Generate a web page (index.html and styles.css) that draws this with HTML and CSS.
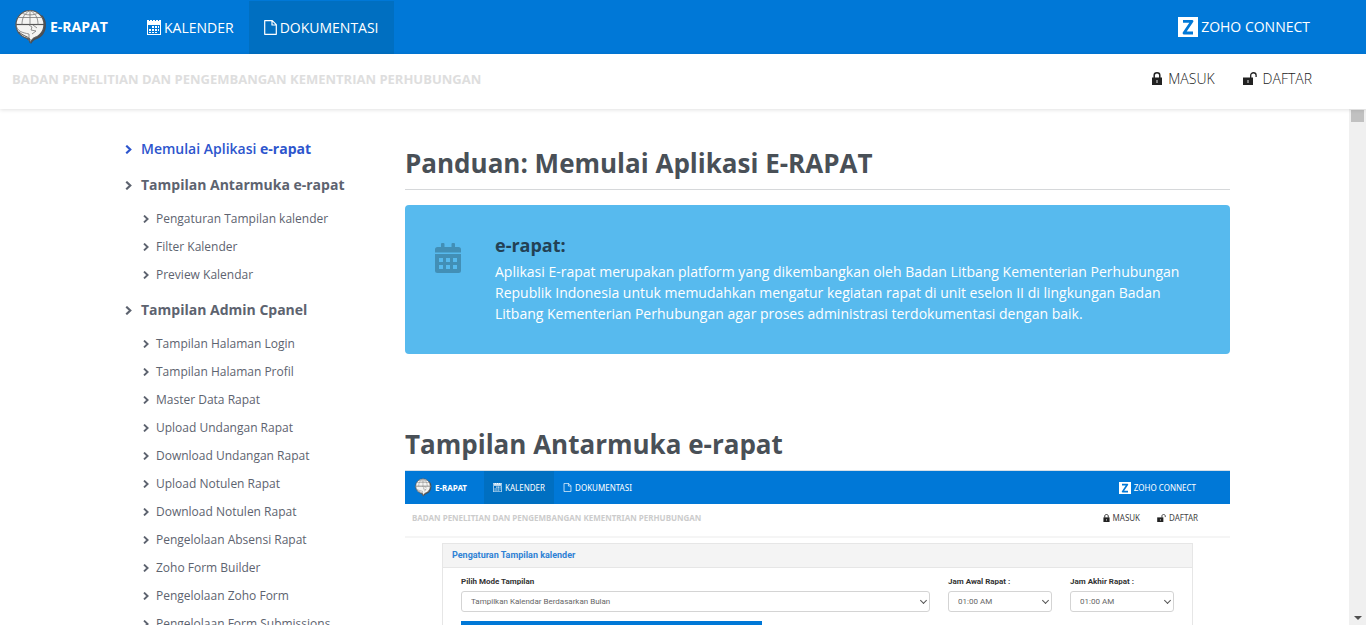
FILE: index.html
```html
<!DOCTYPE html>
<html lang="id">
<head>
<meta charset="utf-8">
<meta name="viewport" content="width=device-width, initial-scale=1">
<title>E-RAPAT - Dokumentasi</title>
<link rel="stylesheet" href="styles.css">
</head>
<body>
<svg class="defs" aria-hidden="true">
  <symbol id="i-logo" viewBox="0 0 32 36">
    <path d="M6 26c5 3 8 5 10 9 2-3 3-4 6-5 6-2 9-8 9-14 0-5-2-8-4-10z" fill="#4a4f55"/>
    <circle cx="15" cy="15.500" r="14" fill="#f4f4f2" stroke="#555" stroke-width="1.200"/>
    <path d="M4 23c4 4 8 4 11 7v4c2-3 2-5 6-6" fill="#f4f4f2" stroke="#555" stroke-width="1"/>
    <path d="M1 15.500h28" stroke="#555" stroke-width="1.200"/>
    <path d="M3 8.500h24M15 1.500v14M15 1.500C8 5 7 11 7 15.500M15 1.500c7 3.500 8 9.500 8 14M7 4c4 2.500 12 2.500 16 0M1 15.500c1 7 6 8 13 9.500M14 16l3 2-1 3 5 1-4 3M18 16l4 3M14 25v7" fill="none" stroke="#777" stroke-width=".8"/>
  </symbol>
  <symbol id="i-cal" viewBox="0 0 14 15">
    <path d="M0 0h2v1h1V0h2v1h1V0h2v1h1V0h2v1h1V0h2v3H0zM0 4h14v11H0zM1 5v9h12V5z" fill="#fff" fill-rule="evenodd"/>
    <path d="M5 6h2v2H5zM8 6h2v2H8zM11 6h1v2h-1zM2 9h2v2H2zM5 9h2v2H5zM8 9h2v2H8zM11 9h1v2h-1zM2 12h2v1H2zM5 12h2v1H5zM8 12h2v1H8z" fill="#fff"/>
    <path d="M0 3h14v1H0z" fill="#fff"/>
  </symbol>
  <symbol id="i-doc" viewBox="0 0 13 15">
    <path d="M.7.7h7.600l4 4v9.600H.7zM8 .7V5h4.300" fill="none" stroke="#fff" stroke-width="1.200" stroke-linejoin="round"/>
  </symbol>
  <symbol id="i-zoho" viewBox="0 0 20 20">
    <path d="M0 0h20v20H0z" fill="#fff"/>
    <path d="M5 4.300h9L6 16h9" fill="none" stroke="#0078d7" stroke-width="2.800" stroke-linejoin="round"/>
  </symbol>
  <symbol id="i-lock" viewBox="0 0 10 13">
    <path d="M2.200 6V3.300c0-3.400 5.600-3.400 5.600 0V6" fill="none" stroke="#222" stroke-width="1.500"/>
    <path d="M0 5.500h10V13H0z" fill="#222"/><path d="M4.500 8h1v3h-1z" fill="#ddd"/>
  </symbol>
  <symbol id="i-unlock" viewBox="0 0 14 13">
    <path d="M7.700 6V3.300c0-3.400 5.400-3.400 5.400 0V5" fill="none" stroke="#222" stroke-width="1.300"/>
    <path d="M0 5.500h10V13H0z" fill="#222"/><path d="M4.500 8h1v3h-1z" fill="#ddd"/>
  </symbol>
  <symbol id="i-chev" viewBox="0 0 6 8">
    <path d="M1 .6 4.600 4 1 7.400" fill="none" stroke="currentColor" stroke-width="1.900"/>
  </symbol>
  <symbol id="i-date" viewBox="0 0 26 30">
    <path fill-rule="evenodd" d="M0 9.500V6.500Q0 4 2.500 4H6V1q0-1 1-1h1.500q1 0 1 1v3h7V1q0-1 1-1H19q1 0 1 1v3h3.500Q26 4 26 6.500V9.500zM0 11h26v16.500q0 2.500-2.500 2.500h-21Q0 30 0 27.500zM4 15v4h4v-4zm7 0v4h4v-4zm7 0v4h4v-4zM4 22v4h4v-4zm7 0v4h4v-4zm7 0v4h4v-4z" fill="currentColor"/>
  </symbol>
</svg>

<header class="topbar">
  <a class="brand" href="#"><svg class="ic-logo"><use href="#i-logo"/></svg>E-RAPAT</a>
  <nav class="tabs">
    <a class="tab" href="#"><svg class="ic-cal"><use href="#i-cal"/></svg>KALENDER</a>
    <a class="tab tab-active" href="#"><svg class="ic-doc"><use href="#i-doc"/></svg>DOKUMENTASI</a>
  </nav>
  <a class="zoho" href="#"><svg class="ic-zoho"><use href="#i-zoho"/></svg>ZOHO CONNECT</a>
</header>
<div class="subbar">
  <strong class="agency">BADAN PENELITIAN DAN PENGEMBANGAN KEMENTRIAN PERHUBUNGAN</strong>
  <a class="account" href="#"><svg class="ic-lock"><use href="#i-lock"/></svg>MASUK</a>
  <a class="account" href="#"><svg class="ic-unlock"><use href="#i-unlock"/></svg>DAFTAR</a>
</div>

<div class="viewport">
  <div class="page">
    <nav class="toc">
      <a class="toc-head toc-current" href="#"><svg class="ic-chev-lg"><use href="#i-chev"/></svg><span>Memulai Aplikasi <b>e-rapat</b></span></a>
      <a class="toc-head" href="#"><svg class="ic-chev-lg"><use href="#i-chev"/></svg><b>Tampilan Antarmuka e-rapat</b></a>
      <ul class="toc-list">
        <li><a href="#"><svg class="ic-chev"><use href="#i-chev"/></svg>Pengaturan Tampilan kalender</a></li>
        <li><a href="#"><svg class="ic-chev"><use href="#i-chev"/></svg>Filter Kalender</a></li>
        <li><a href="#"><svg class="ic-chev"><use href="#i-chev"/></svg>Preview Kalendar</a></li>
      </ul>
      <a class="toc-head" href="#"><svg class="ic-chev-lg"><use href="#i-chev"/></svg><b>Tampilan Admin Cpanel</b></a>
      <ul class="toc-list">
        <li><a href="#"><svg class="ic-chev"><use href="#i-chev"/></svg>Tampilan Halaman Login</a></li>
        <li><a href="#"><svg class="ic-chev"><use href="#i-chev"/></svg>Tampilan Halaman Profil</a></li>
        <li><a href="#"><svg class="ic-chev"><use href="#i-chev"/></svg>Master Data Rapat</a></li>
        <li><a href="#"><svg class="ic-chev"><use href="#i-chev"/></svg>Upload Undangan Rapat</a></li>
        <li><a href="#"><svg class="ic-chev"><use href="#i-chev"/></svg>Download Undangan Rapat</a></li>
        <li><a href="#"><svg class="ic-chev"><use href="#i-chev"/></svg>Upload Notulen Rapat</a></li>
        <li><a href="#"><svg class="ic-chev"><use href="#i-chev"/></svg>Download Notulen Rapat</a></li>
        <li><a href="#"><svg class="ic-chev"><use href="#i-chev"/></svg>Pengelolaan Absensi Rapat</a></li>
        <li><a href="#"><svg class="ic-chev"><use href="#i-chev"/></svg>Zoho Form Builder</a></li>
        <li><a href="#"><svg class="ic-chev"><use href="#i-chev"/></svg>Pengelolaan Zoho Form</a></li>
        <li><a href="#"><svg class="ic-chev"><use href="#i-chev"/></svg>Pengelolaan Form Submissions</a></li>
      </ul>
    </nav>

    <main class="content">
      <h1 class="title">Panduan: Memulai Aplikasi E-RAPAT</h1>
      <section class="callout">
        <svg class="ic-date"><use href="#i-date"/></svg>
        <div>
          <h2 class="callout-title">e-rapat:</h2>
          <p class="callout-text">Aplikasi E-rapat merupakan platform yang dikembangkan oleh Badan Litbang Kementerian Perhubungan Republik Indonesia untuk memudahkan mengatur kegiatan rapat di unit eselon II di lingkungan Badan Litbang Kementerian Perhubungan agar proses administrasi terdokumentasi dengan baik.</p>
        </div>
      </section>
      <h2 class="section-title">Tampilan Antarmuka e-rapat</h2>

      <section class="preview">
        <div class="mini-top">
          <a class="mini-brand" href="#"><svg class="mini-logo"><use href="#i-logo"/></svg>E-RAPAT</a>
          <a class="mini-tab mini-active" href="#"><svg class="mini-icon"><use href="#i-cal"/></svg>KALENDER</a>
          <a class="mini-tab" href="#"><svg class="mini-icon"><use href="#i-doc"/></svg>DOKUMENTASI</a>
          <a class="mini-zoho" href="#"><svg class="mini-z"><use href="#i-zoho"/></svg>ZOHO CONNECT</a>
        </div>
        <div class="mini-sub">
          <strong class="mini-agency">BADAN PENELITIAN DAN PENGEMBANGAN KEMENTRIAN PERHUBUNGAN</strong>
          <a class="mini-account" href="#"><svg class="mini-lock"><use href="#i-lock"/></svg>MASUK</a>
          <a class="mini-account" href="#"><svg class="mini-unlock"><use href="#i-unlock"/></svg>DAFTAR</a>
        </div>
        <div class="card">
          <h3 class="card-title">Pengaturan Tampilan kalender</h3>
          <form class="card-form">
            <div class="field field-wide">
              <label for="mode">Pilih Mode Tampilan</label>
              <span class="select"><select id="mode"><option>Tampilkan Kalendar Berdasarkan Bulan</option></select></span>
              <button class="apply" type="button" aria-label="Tampilkan"></button>
            </div>
            <div class="field">
              <label for="start">Jam Awal Rapat :</label>
              <span class="select"><select id="start"><option>01:00 AM</option></select></span>
            </div>
            <div class="field">
              <label for="end">Jam Akhir Rapat :</label>
              <span class="select"><select id="end"><option>01:00 AM</option></select></span>
            </div>
          </form>
        </div>
      </section>
    </main>
  </div>
  <div class="scrollbar" aria-hidden="true"><i class="thumb"></i><i class="arrow"></i></div>
</div>
</body>
</html>
```
FILE: styles.css
```css
* { box-sizing: border-box; }
html, body { height: 100%; }
body {
  margin: 0;
  display: flex;
  flex-direction: column;
  overflow: hidden;
  background: #fff;
  color: #495057;
  font: 14px/20px "Open Sans", sans-serif;
}
a { color: inherit; text-decoration: none; }
svg { display: block; flex: none; }
.defs { position: absolute; width: 0; height: 0; }

.topbar {
  display: flex;
  flex: none;
  height: 54px;
  padding: 0 56px 0 15px;
  background: #0078d7;
  color: #fff;
}
.brand { display: flex; align-items: center; gap: 3px; width: 117px; font-weight: 700; }
.ic-logo { width: 32px; height: 36px; }
.tabs { display: flex; padding-top: 1px; }
.tab { display: flex; align-items: center; gap: 3px; padding: 0 15px; }
.tab-active { background: #006fc1; }
.ic-cal { width: 14px; height: 15px; }
.ic-doc { width: 13px; height: 15px; }
.zoho { display: flex; align-items: center; gap: 3px; margin-left: auto; }
.ic-zoho { width: 20px; height: 20px; }

.subbar {
  position: relative;
  display: flex;
  flex: none;
  align-items: center;
  gap: 28px;
  height: 55px;
  padding: 0 54px 6px 12px;
  background: #fff;
  color: #222;
  box-shadow: 0 1px 4px rgba(0, 0, 0, .12);
}
.agency { margin-right: auto; color: #dedede; font-size: 13px; }
.account { display: flex; align-items: center; gap: 6px; font-weight: 300; }
.ic-lock { width: 10px; height: 13px; }
.ic-unlock { width: 14px; height: 13px; }

.viewport { display: flex; flex: 1; min-height: 0; }
.page { display: flex; flex: 1; min-width: 0; padding: 30px 119px 0 125px; overflow: hidden; }
.toc { flex: none; width: 280px; color: #5d636f; }
.toc-head { display: flex; align-items: center; gap: 9px; height: 20px; margin-bottom: 16px; }
.toc-current { color: #2d55cd; font-weight: 600; }
.toc-head b { font-weight: 700; }
.ic-chev { width: 6px; height: 8px; }
.ic-chev-lg { width: 7px; height: 9px; }
.toc-list { margin: 0 0 11px; padding: 0 0 0 18px; list-style: none; font-size: 12px; }
.toc-list a { display: flex; align-items: center; gap: 7px; height: 28px; }
.toc-head + .toc-list { margin-top: -6px; }

.content { flex: 1; min-width: 0; }
.title {
  margin: 0 0 15px;
  padding: 6px 0 8px;
  border-bottom: 1px solid #d6d8da;
  font-size: 26px;
  line-height: 36px;
}
.callout {
  display: flex;
  gap: 34px;
  margin-bottom: 72px;
  padding: 26px 30px 30px;
  border-radius: 4px;
  background: #57baee;
}
.ic-date { width: 26px; height: 30px; margin-top: 12px; color: #428fb6; }
.callout-title { margin: 0 0 2px; color: #234154; font-size: 18px; line-height: 28px; }
.callout-text { margin: 0; color: #fff; line-height: 21px; }
.section-title { margin: 0 0 8px; font-size: 26px; line-height: 36px; }

.preview { color: #444; font: 8px/12px "Noto Sans", sans-serif; border-top: 1px solid #d5dfe8; }
.mini-top { display: flex; height: 33px; padding: 0 34px 0 10px; background: #0078d7; color: #fff; }
.mini-top a, .mini-account { display: flex; align-items: center; gap: 3px; }
.mini-brand { width: 69px; font-weight: 700; }
.mini-logo { width: 17px; height: 19px; }
.mini-tab { padding: 0 9px; }
.mini-active { background: #006fc1; }
.mini-icon { width: 9px; height: 9px; }
.mini-zoho { margin-left: auto; }
.mini-z { width: 12px; height: 12px; }
.mini-sub {
  display: flex;
  align-items: center;
  gap: 17px;
  height: 34px;
  padding: 0 32px 4px 7px;
  border-bottom: 2px solid #f5f5f5;
}
.mini-agency { margin-right: auto; color: #ccc; }
.mini-lock { width: 7px; height: 8px; }
.mini-unlock { width: 9px; height: 8px; }
.card { margin: 5px 37px 0; border: 1px solid #e6e6e6; font-family: Roboto, sans-serif; }
.card-title {
  margin: 0;
  padding: 0 9px;
  border-bottom: 1px solid #e6e6e6;
  background: #f4f4f4;
  color: #2f82d4;
  font-size: 9px;
  font-weight: 700;
  line-height: 23px;
}
.card-form { display: flex; gap: 18px; padding: 8px 18px 0; }
.field { display: flex; flex: 0 0 104px; flex-direction: column; gap: 3px; }
.field-wide { flex: 1; }
.field label { color: #333; font-size: 8px; font-weight: 700; }
.select { position: relative; display: block; }
.select::after {
  content: "";
  position: absolute;
  top: 7px;
  right: 4px;
  width: 4px;
  height: 4px;
  border: solid #555;
  border-width: 0 1px 1px 0;
  transform: rotate(45deg);
}
.select select {
  display: block;
  width: 100%;
  height: 21px;
  padding: 0 9px;
  border: 1px solid #d4d4d4;
  border-radius: 3px;
  background: #fff;
  color: #666;
  font: 8px Roboto, sans-serif;
  appearance: none;
}
.apply { width: 301px; height: 22px; margin-top: 6px; border: 0; background: #0078d7; }

.scrollbar {
  display: flex;
  flex: none;
  flex-direction: column;
  justify-content: space-between;
  align-items: center;
  width: 17px;
  padding: 1px 0 5px;
  background: #f0f0f0;
}
.thumb { width: 13px; height: 12px; background: #c1c1c1; }
.arrow { border: solid transparent; border-width: 4px 4px 0; border-top-color: #505050; }
```
